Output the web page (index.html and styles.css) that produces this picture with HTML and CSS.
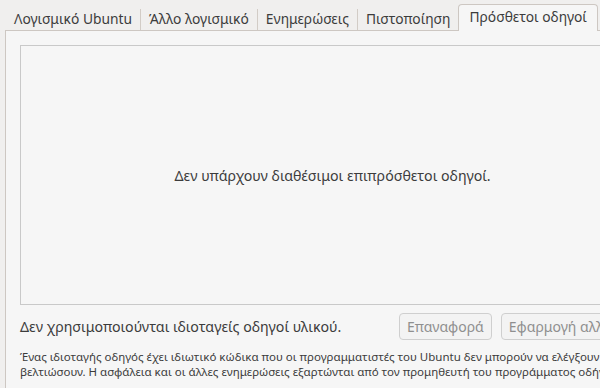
FILE: index.html
```html
<!DOCTYPE html>
<html>

<head>
  <title>Λογισμικό &amp; Ενημερώσεις</title>
  <meta charset="utf-8">
  <link rel="stylesheet" href="styles.css">
</head>

<body>
  <div id="window">
    <div class="tabs">
      <div class="tab">Λογισμικό Ubuntu</div>
      <div class="tab">Άλλο λογισμικό</div>
      <div class="tab">Ενημερώσεις</div>
      <div class="tab">Πιστοποίηση</div>
      <div class="tab active">Πρόσθετοι οδηγοί</div>
    </div>
    <div class="page">
      <div class="driver-list">
        <span>Δεν υπάρχουν διαθέσιμοι επιπρόσθετοι οδηγοί.</span>
      </div>
      <div class="status-row">
        <span class="status">Δεν χρησιμοποιούνται ιδιοταγείς οδηγοί υλικού.</span>
        <button disabled>Επαναφορά</button>
        <button disabled>Εφαρμογή αλλαγών</button>
      </div>
      <p class="note">Ένας ιδιοταγής οδηγός έχει ιδιωτικό κώδικα που οι προγραμματιστές του Ubuntu δεν μπορούν να ελέγξουν ή να<br>βελτιώσουν. Η ασφάλεια και οι άλλες ενημερώσεις εξαρτώνται από τον προμηθευτή του προγράμματος οδήγησης.</p>
    </div>
  </div>
</body>

</html>
```

FILE: styles.css
```css
body {
  margin: 0;
  background: #f0efee;
  font-family: "Noto Sans", sans-serif;
  color: #3c3c3c;
  overflow: hidden;
}

#window {
  width: 660px;
  height: 388px;
}

/* BARRA DE ABAS */
.tabs {
  display: flex;
  align-items: flex-end;
  height: 30px;
  padding-left: 6px;
}

.tab {
  height: 21px;
  line-height: 19px;
  padding: 0 8px;
  font-size: 13.8px;
  border-right: 1px solid #d2ccc6;
  white-space: nowrap;
}

.tab.active {
  height: 26px;
  line-height: 24px;
  margin-left: -1px;
  margin-bottom: -1px;
  padding: 0 10px;
  background: #f6f6f6;
  border: 1px solid #cdc7c2;
  border-bottom: none;
  border-radius: 4px 4px 0 0;
  position: relative;
}

/* PAINEL */
.page {
  margin-left: 5px;
  height: 357px;
  padding: 14px 15px 0 14px;
  background: #f6f6f6;
  border-top: 1px solid #cdc7c2;
  border-left: 1px solid #cdc7c2;
}

.driver-list {
  height: 258px;
  border: 1px solid #c9c9c9;
  display: flex;
  justify-content: center;
  align-items: center;
  font-size: 14.2px;
}

.status-row {
  display: flex;
  align-items: center;
  gap: 9px;
  margin-top: 8px;
}

.status {
  flex-grow: 1;
  font-size: 14.2px;
}

button {
  height: 27px;
  padding: 0 7px;
  font-family: inherit;
  font-size: 14px;
  color: #8f8f8f;
  background: #f3f3f3;
  border: 1px solid #cfcfcf;
  border-radius: 4px;
}

.note {
  margin: 9px 0 0;
  font-size: 11.5px;
  line-height: 15px;
  white-space: nowrap;
}
```
